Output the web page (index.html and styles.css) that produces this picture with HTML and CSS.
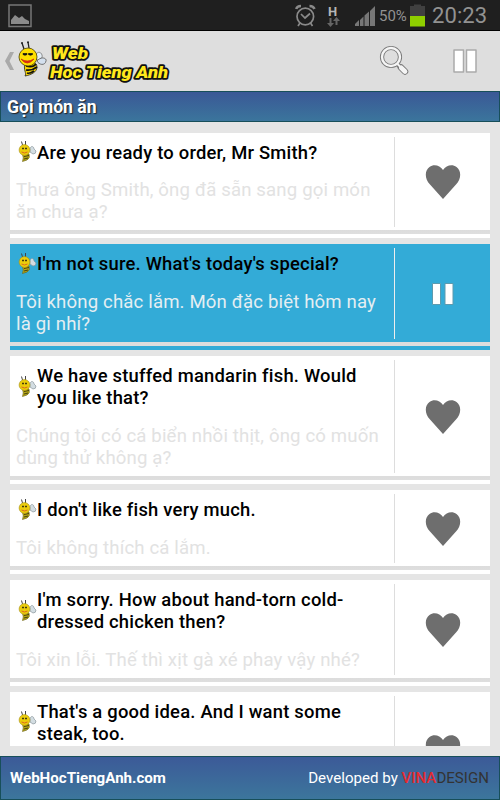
FILE: index.html
```
<!DOCTYPE html>
<html lang="vi">
<head>
	<meta charset="UTF-8">
	<title>Web Hoc Tieng Anh</title>
	<link rel="stylesheet" href="styles.css">
</head>
<body>
	<svg class="defs">
		<symbol id="bee" viewBox="0 0 29 36">
			<path d="M6 8L4 2M11 7L10 1" stroke="#222" stroke-width="1.3" fill="none"/>
			<circle cx="4" cy="2" r="1" fill="#222"/>
			<circle cx="10" cy="1.3" r="1" fill="#222"/>
			<path d="M18 17C17 10 23 10 24 14C25 17 22 19 19 19Z" fill="#e4edf5" stroke="#777" stroke-width=".8"/>
			<path d="M19 20C23 15 29 17 28 20C27 25 21 24 19 20Z" fill="#d4e0ee" stroke="#555" stroke-width=".8"/>
			<path d="M7 23C12 22 19 20 19 26C19 31 13 34 7 35C9 32 5 29 7 23Z" fill="#f6d400" stroke="#222" stroke-width=".8"/>
			<path d="M8 25Q15 27 18 23M8 29Q14 30 19 26M9 32Q12 33 16 30" fill="none" stroke="#111" stroke-width="1.7"/>
			<circle cx="10" cy="16" r="9" fill="#ffdf00" stroke="#4a4000" stroke-width=".8"/>
			<path d="M5 12.5H9V13.500Q7 15 5 13.500ZM10.500 12.500H14.500V13.500Q12.500 15 10.500 13.500Z" fill="#111" stroke="#111" stroke-width=".7"/>
			<path d="M3 18Q9 26 16 18Q9 22 3 18Z" fill="#e02a13" stroke="#c72a10" stroke-width=".7"/>
		</symbol>
		<symbol id="bee-small" viewBox="0 0 19 22">
			<path d="M4.500 5L3.500 1.500M7.500 5V1" stroke="#444" fill="none"/>
			<path d="M12 10C12 5 16 6 16 9L18 11Q18 14 15 14L12 12Z" fill="#d3dde2" stroke="#8b979c" stroke-width=".7"/>
			<path d="M4.500 14H11Q12.500 18 9 20L4.500 21.500Q6 18 4.500 14Z" fill="#b8a914" stroke="#665d14" stroke-width=".6"/>
			<path d="M6 16.500L11 15.500M6 19L10 18" stroke="#444012"/>
			<circle cx="6.500" cy="10" r="5.400" fill="#ebcd0c" stroke="#a69114" stroke-width=".6"/>
			<path d="M4 8.500H6M7 8.500H9" stroke="#443c0c" stroke-width="1.300"/>
			<path d="M3.500 12Q6.500 14 9.500 12" stroke="#db6a20" fill="none"/>
		</symbol>
		<symbol id="heart" viewBox="0 0 36 34">
			<path d="M18 34L5 19.5C-1 13 0 5 4.500 2C9-1.500 15 .5 18 5C21 .5 27-1.500 31.500 2C36 5 37 13 31 19.500Z" fill="#6e6e6e"/>
		</symbol>
	</svg>

	<div class="screen">
		<div class="status-bar">
			<svg class="status-photo" width="24" height="24" viewBox="0 0 24 24">
				<rect x="1" y="1" width="22" height="21.500" fill="none" stroke="#777" stroke-width="1.500"/>
				<path d="M3 20V16L7 11L11 14L14 12L17 15L21 17V20Z" fill="#8b8b8b"/>
			</svg>
			<svg class="status-icons" width="82" height="30" viewBox="0 0 82 30">
				<g fill="none" stroke="#8a8a8a" stroke-width="1.700">
					<circle cx="10.300" cy="16.500" r="8.300"/>
					<path d="M6 14L10 18L15 13.500M5 23L3 26M15.500 23L17.500 26"/>
					<path d="M1.200 9Q2 6 6 6M14.500 6Q18.500 6 19.500 9" stroke-width="2.500"/>
				</g>
				<text x="33" y="16" class="status-h">H</text>
				<path d="M36 18V23H38.500L35 27L31.500 23H34V18ZM42 25V21H44.500L41 17L37.500 21H40V25Z" transform="translate(.5 0)" fill="#666"/>
				<g fill="#777">
					<path d="M60 26V24L64 20V26Z"/>
					<path d="M65 26V20L68.500 16.500V26Z"/>
					<path d="M69.500 26V15.500L74 11.500V26Z"/>
					<path d="M75 26V11L80 6V26Z"/>
				</g>
			</svg>
			<span class="battery-text">50%</span>
			<svg class="battery" width="15" height="30" viewBox="0 0 15 30">
				<path d="M0 6H4V4.500H11V6H15V16H0Z" fill="#404040"/>
				<rect y="16" width="15" height="10.500" fill="#8fcf00"/>
			</svg>
			<span class="clock">20:23</span>
		</div>

		<div class="action-bar">
			<svg class="back" width="9" height="18" viewBox="0 0 9 18"><path d="M5 0H9L4.500 9L9 18H5L0 9Z" fill="#aaa"/></svg>
			<svg class="logo-bee" width="29" height="36"><use href="#bee"/></svg>
			<svg class="logo-text" width="124" height="44" viewBox="0 0 124 44">
				<text x="5" y="20" textLength="36" lengthAdjust="spacingAndGlyphs">Web</text>
				<text x="3" y="38.500" textLength="118" lengthAdjust="spacingAndGlyphs">Hoc Tieng Anh</text>
			</svg>
			<svg class="search" width="32" height="32" viewBox="0 0 32 32">
				<g fill="none">
					<path d="M19 20L26 27" stroke="#777" stroke-width="4"/>
					<path d="M22 22.500L26 26.500" stroke="#777" stroke-width="6.500" stroke-linecap="round"/>
					<circle cx="12" cy="12" r="9" stroke="#777" stroke-width="4.200"/>
					<circle cx="12" cy="12" r="9" stroke="#f5f5f5" stroke-width="2.400"/>
					<path d="M18.500 19L22 22.500" stroke="#f5f5f5" stroke-width="2"/>
					<path d="M22.300 22.800L26 26.500" stroke="#f5f5f5" stroke-width="4.700" stroke-linecap="round"/>
				</g>
			</svg>
			<svg class="pause" width="24" height="24" viewBox="0 0 24 24">
				<path d="M1 1H10.500V23H1ZM13.500 1H23V23H13.500Z" fill="#fff" stroke="#aaa" stroke-width="1.500" stroke-linejoin="round"/>
			</svg>
		</div>

		<div class="title-bar">Gọi món ăn</div>

		<div class="list">
			<div class="card">
				<div class="card-body">
					<div class="phrase">
						<div class="en"><svg class="bee"><use href="#bee-small"/></svg><p>Are you ready to order, Mr Smith?</p></div>
						<p class="vi">Thưa ông Smith, ông đã sẵn sang gọi món<br>ăn chưa ạ?</p>
					</div>
					<div class="action"><svg class="heart"><use href="#heart"/></svg></div>
				</div>
			</div>
			<div class="card active">
				<div class="card-body">
					<div class="phrase">
						<div class="en"><svg class="bee"><use href="#bee-small"/></svg><p>I'm not sure. What's today's special?</p></div>
						<p class="vi">Tôi không chắc lắm. Món đặc biệt hôm nay<br>là gì nhỉ?</p>
					</div>
					<div class="action">
						<svg width="24" height="24" viewBox="0 0 24 24">
							<path d="M1.500 1.500H9.500V22.500H1.500ZM14 1.500H22V22.500H14Z" fill="#fff" stroke="#5d9aae" stroke-width="1"/>
						</svg>
					</div>
				</div>
			</div>
			<div class="card">
				<div class="card-body">
					<div class="phrase">
						<div class="en"><svg class="bee"><use href="#bee-small"/></svg><p>We have stuffed mandarin fish. Would<br>you like that?</p></div>
						<p class="vi">Chúng tôi có cá biển nhồi thịt, ông có muốn<br>dùng thử không ạ?</p>
					</div>
					<div class="action"><svg class="heart"><use href="#heart"/></svg></div>
				</div>
			</div>
			<div class="card">
				<div class="card-body">
					<div class="phrase">
						<div class="en"><svg class="bee"><use href="#bee-small"/></svg><p>I don't like fish very much.</p></div>
						<p class="vi">Tôi không thích cá lắm.</p>
					</div>
					<div class="action"><svg class="heart"><use href="#heart"/></svg></div>
				</div>
			</div>
			<div class="card">
				<div class="card-body">
					<div class="phrase">
						<div class="en"><svg class="bee"><use href="#bee-small"/></svg><p>I'm sorry. How about hand-torn cold-<br>dressed chicken then?</p></div>
						<p class="vi">Tôi xin lỗi. Thế thì xịt gà xé phay vậy nhé?</p>
					</div>
					<div class="action"><svg class="heart"><use href="#heart"/></svg></div>
				</div>
			</div>
			<div class="card">
				<div class="card-body">
					<div class="phrase">
						<div class="en"><svg class="bee"><use href="#bee-small"/></svg><p>That's a good idea. And I want some<br>steak, too.</p></div>
						<p class="vi">&nbsp;<br>&nbsp;</p>
					</div>
					<div class="action"><svg class="heart"><use href="#heart"/></svg></div>
				</div>
			</div>
		</div>

		<div class="footer">
			<b>WebHocTiengAnh.com</b>
			<span>Developed by <span class="vina">VINA</span><span class="design">DESIGN</span></span>
		</div>
	</div>
</body>
</html>
```
FILE: styles.css
```
* {
	box-sizing: border-box;
}
body {
	margin: 0;
	font-family: Roboto, "Noto Sans", sans-serif;
}
p {
	margin: 0;
}
svg {
	display: block;
	flex: none;
}
.defs {
	display: none;
}
.screen {
	width: 500px;
	height: 800px;
	display: flex;
	flex-direction: column;
	overflow: hidden;
	background: #e5e5e5;
}

.status-bar {
	height: 31px;
	flex: none;
	display: flex;
	background: #1f1f1f;
	border-bottom: 1px solid #000;
	color: #929292;
	line-height: 32px;
}
.status-photo {
	margin: 4px 0 0 8px;
}
.status-icons {
	margin-left: 263px;
}
.status-h {
	font-size: 13px;
	font-weight: bold;
	fill: #b5b5b5;
}
.battery-text {
	width: 31px;
	margin-left: 2px;
	font-size: 15px;
}
.battery {
	margin-right: 7px;
}
.clock {
	font-size: 22px;
	letter-spacing: .1px;
}

.action-bar {
	height: 60px;
	flex: none;
	display: flex;
	align-items: center;
	padding-left: 5px;
	background: #dedede;
}
.logo-bee {
	margin: -4px 0 0 4px;
}
.logo-text text {
	font: italic 900 17px Roboto, sans-serif;
	fill: #ffe81c;
	stroke: #111;
	stroke-width: 3.5px;
	stroke-linejoin: round;
	paint-order: stroke;
}
.search {
	margin-left: 208px;
}
.pause {
	margin-left: 42px;
}

.title-bar {
	height: 31px;
	flex: none;
	padding-left: 6px;
	background: linear-gradient(#3a5896, #3b759c);
	border: 1px solid #174f5a;
	color: #fff;
	font-size: 17.6px;
	font-weight: 700;
	line-height: 30px;
	text-shadow: 1px 1px 1px #222;
}

.list {
	flex: none;
	height: 624px;
	margin-bottom: 10px;
	padding: 10.5px 10px 0;
	overflow: hidden;
}
.card {
	margin-bottom: 6px;
	padding-bottom: 4px;
	background: #fff;
}
.card-body {
	display: flex;
	border-bottom: 4px solid #c8c8c8;
	border-image: linear-gradient(#bcbcbc, #dedede) 4;
	border-width: 0 0 4px;
}
.phrase {
	width: 384px;
	padding: 9px 0 7px 6px;
	font-size: 18.6px;
	line-height: 22px;
	letter-spacing: .15px;
	white-space: nowrap;
}
.en {
	display: flex;
	align-items: center;
	margin-bottom: 15.9px;
	color: #000;
	font-size: 18.4px;
	font-weight: 500;
	letter-spacing: .22px;
}
.bee {
	width: 19px;
	height: 22px;
	margin: -3px 0 0 2px;
}
.vi {
	color: #e2e2e2;
}
.action {
	flex: 1;
	display: flex;
	align-items: center;
	justify-content: center;
	margin: 4px 0 3px;
	border-left: 1px solid #ddd;
}
.heart {
	width: 36px;
	height: 34px;
}
.active {
	background: #33abd7;
}
.active .vi {
	color: #e4eef2;
}
.active .action {
	border-color: #eee;
}

.footer {
	height: 44px;
	flex: none;
	display: flex;
	justify-content: space-between;
	padding: 0 10px 0 9px;
	background: linear-gradient(#3c5a98, #3c769c);
	border: 1px solid #174f5a;
	color: #fff;
	font-size: 15.1px;
	line-height: 43px;
}
.vina {
	color: #e42a30;
	font-weight: 500;
}
.design {
	color: #333;
}
```
